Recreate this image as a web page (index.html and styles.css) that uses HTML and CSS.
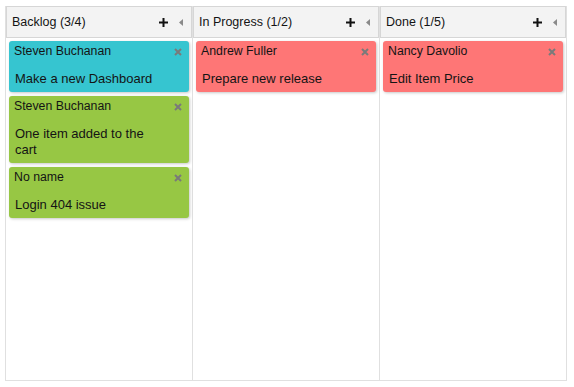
FILE: index.html
```html
<!DOCTYPE html>
<html lang="en">
<head>
    <meta charset="UTF-8">
    <title>Kanban</title>
    <link rel="stylesheet" href="styles.css">
</head>
<body>

    <div class="board">
        <div class="column">
            <div class="column-header">
                <span class="title">Backlog (3/4)</span>
                <svg class="add" width="9" height="9" viewBox="0 0 9 9"><rect x="3.5" y="0" width="2" height="9" fill="#111"/><rect x="0" y="3.5" width="9" height="2" fill="#111"/></svg>
                <svg class="collapse" width="4" height="7" viewBox="0 0 4 7"><polygon points="4,0 4,7 0,3.5" fill="#8a8a8a"/></svg>
            </div>
            <div class="card teal">
                <div class="name">Steven Buchanan</div>
                <svg class="close" width="8" height="8" viewBox="0 0 8 8"><path d="M1 1 L7 7 M7 1 L1 7" stroke="#7a7a7a" stroke-width="2"/></svg>
                <div class="text">Make a new Dashboard</div>
            </div>
            <div class="card green">
                <div class="name">Steven Buchanan</div>
                <svg class="close" width="8" height="8" viewBox="0 0 8 8"><path d="M1 1 L7 7 M7 1 L1 7" stroke="#7a7a7a" stroke-width="2"/></svg>
                <div class="text">One item added to the cart</div>
            </div>
            <div class="card green">
                <div class="name">No name</div>
                <svg class="close" width="8" height="8" viewBox="0 0 8 8"><path d="M1 1 L7 7 M7 1 L1 7" stroke="#7a7a7a" stroke-width="2"/></svg>
                <div class="text">Login 404 issue</div>
            </div>
        </div>

        <div class="column">
            <div class="column-header">
                <span class="title">In Progress (1/2)</span>
                <svg class="add" width="9" height="9" viewBox="0 0 9 9"><rect x="3.5" y="0" width="2" height="9" fill="#111"/><rect x="0" y="3.5" width="9" height="2" fill="#111"/></svg>
                <svg class="collapse" width="4" height="7" viewBox="0 0 4 7"><polygon points="4,0 4,7 0,3.5" fill="#8a8a8a"/></svg>
            </div>
            <div class="card red">
                <div class="name">Andrew Fuller</div>
                <svg class="close" width="8" height="8" viewBox="0 0 8 8"><path d="M1 1 L7 7 M7 1 L1 7" stroke="#7a7a7a" stroke-width="2"/></svg>
                <div class="text">Prepare new release</div>
            </div>
        </div>

        <div class="column">
            <div class="column-header">
                <span class="title">Done (1/5)</span>
                <svg class="add" width="9" height="9" viewBox="0 0 9 9"><rect x="3.5" y="0" width="2" height="9" fill="#111"/><rect x="0" y="3.5" width="9" height="2" fill="#111"/></svg>
                <svg class="collapse" width="4" height="7" viewBox="0 0 4 7"><polygon points="4,0 4,7 0,3.5" fill="#8a8a8a"/></svg>
            </div>
            <div class="card red">
                <div class="name">Nancy Davolio</div>
                <svg class="close" width="8" height="8" viewBox="0 0 8 8"><path d="M1 1 L7 7 M7 1 L1 7" stroke="#7a7a7a" stroke-width="2"/></svg>
                <div class="text">Edit Item Price</div>
            </div>
        </div>
    </div>

</body>
</html>
```

FILE: styles.css
```css
body {
    font-family: "Liberation Sans", Arial, sans-serif;
    margin: 0;
    background-color: #fff;
    color: #141414;
}

.board {
    display: flex;
    width: 562px;
    height: 375px;
    margin: 6px 0 0 5px;
    border-left: 1px solid #e0e0e0;
    border-bottom: 1px solid #e0e0e0;
    box-sizing: border-box;
}

.column {
    flex: 1;
    border-right: 1px solid #e0e0e0;
}

.column-header {
    display: flex;
    align-items: center;
    height: 32px;
    box-sizing: border-box;
    padding: 0 8px 0 5px;
    background-color: #f3f3f3;
    border: 1px solid #d6d6d6;
    font-size: 12.5px;
}

.column-header .title {
    flex: 1;
}

.column-header .add {
    margin-right: 11px;
}

.card {
    position: relative;
    margin: 3px 3px 0 3px;
    padding: 2px 5px 5px 5px;
    border-radius: 3px;
    box-shadow: 1px 1px 3px rgba(0, 0, 0, 0.22);
}

.card + .card {
    margin-top: 4px;
}

.teal { background-color: #36c5d0; }
.green { background-color: #97c744; }
.red { background-color: #fe7676; }

.name {
    font-size: 12.3px;
    line-height: 17px;
}

.text {
    font-size: 13px;
    line-height: 16px;
    margin-top: 11px;
    padding: 0 20px 0 1px;
}

.close {
    position: absolute;
    top: 7px;
    right: 7px;
}
```
